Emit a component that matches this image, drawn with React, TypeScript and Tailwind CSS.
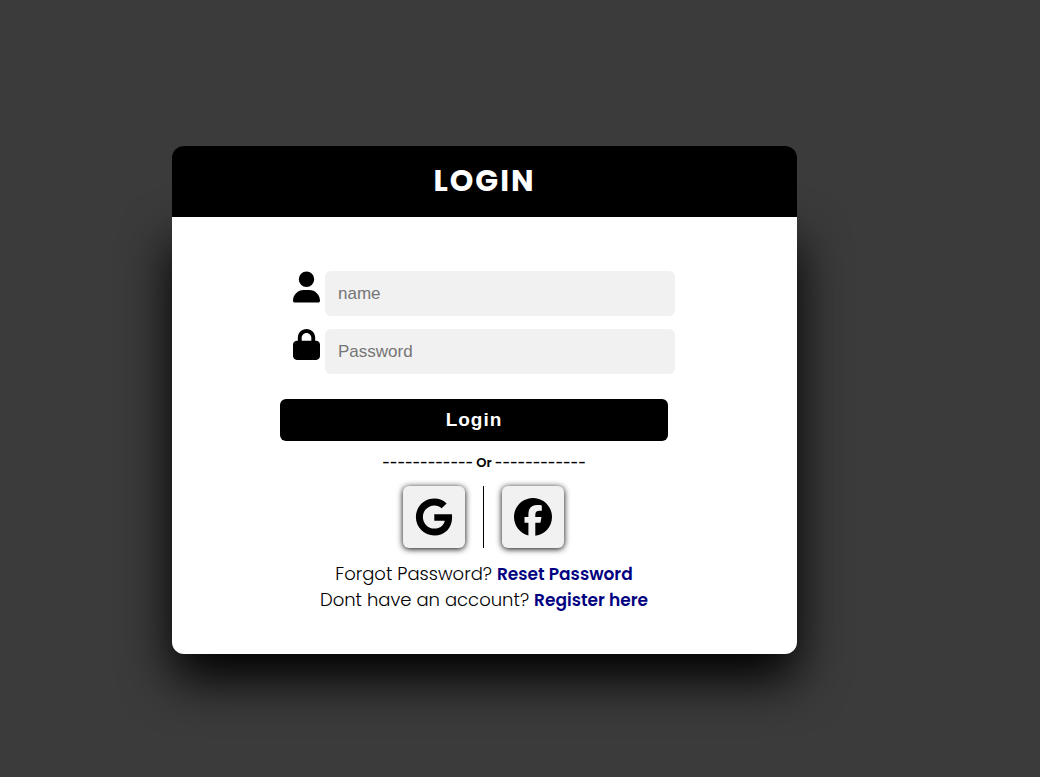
import { FaUser, FaLock, FaGoogle, FaFacebook } from "react-icons/fa6";

export default function App() {
  return (
    <main className="min-h-screen bg-[#3b3b3b] px-4 pt-[146px] pb-16 font-['Poppins','Inter',sans-serif] text-black sm:pl-[172px]">
      <section className="w-full max-w-[625px]">
        <header className="relative rounded-t-xl bg-black pt-[14px] pb-4 text-center">
          <h1 className="text-[30px] leading-[41px] font-bold tracking-[2px] text-white">LOGIN</h1>
        </header>
        <div className="rounded-b-xl bg-white pt-[54px] pr-[17px] pb-[41px] pl-4 shadow-[0_25px_50px_#000]">
          <form className="mx-auto w-full max-w-[408px]" onSubmit={(e) => e.preventDefault()}>
            <div className="flex flex-col gap-[13px] px-[13px]">
              <div className="flex gap-1">
                <label htmlFor="name" aria-label="name" className="w-7 shrink-0">
                  <FaUser className="h-8 w-[27px]" />
                </label>
                <input
                  id="name"
                  type="text"
                  placeholder="name"
                  className="h-[45px] w-full min-w-0 rounded-md bg-[#f1f1f1] px-[13px] font-['Liberation_Sans',sans-serif] text-[17px] placeholder:text-[#757575]"
                />
              </div>
              <div className="flex gap-1">
                <label htmlFor="password" aria-label="Password" className="w-7 shrink-0">
                  <FaLock className="h-[31px] w-[27px]" />
                </label>
                <input
                  id="password"
                  type="password"
                  placeholder="Password"
                  className="h-[45px] w-full min-w-0 rounded-md bg-[#f1f1f1] px-[13px] font-['Liberation_Sans',sans-serif] text-[17px] placeholder:text-[#757575]"
                />
              </div>
            </div>
            <div className="pt-[25px] pr-5">
              <button
                type="submit"
                className="h-[42px] w-full rounded-md bg-black font-['Liberation_Sans',sans-serif] text-[19px] font-bold tracking-[1px] text-white"
              >
                Login
              </button>
            </div>
          </form>
          <p className="pt-3 text-center text-[13px] leading-5 font-semibold">------------ Or ------------</p>
          <div className="flex justify-center gap-[18px] pt-[13px] pr-px">
            <button
              type="button"
              aria-label="Google"
              className="flex size-[62px] items-center justify-center rounded-md bg-[#f1f1f1] shadow-[0_1px_6px_#000]"
            >
              <FaGoogle className="size-[38px]" />
            </button>
            <div className="w-px bg-black" />
            <button
              type="button"
              aria-label="Facebook"
              className="flex size-[62px] items-center justify-center rounded-md bg-[#f1f1f1] shadow-[0_1px_6px_#000]"
            >
              <FaFacebook className="size-[38px]" />
            </button>
          </div>
          <div className="pt-[13px] text-center text-[18px] leading-[26px] font-light">
            <p>
              Forgot Password?{" "}
              <a href="#reset" className="text-[17px] font-semibold text-[#000080]">
                Reset Password
              </a>
            </p>
            <p>
              Dont have an account?{" "}
              <a href="#register" className="text-[17px] font-semibold text-[#000080]">
                Register here
              </a>
            </p>
          </div>
        </div>
      </section>
    </main>
  );
}
